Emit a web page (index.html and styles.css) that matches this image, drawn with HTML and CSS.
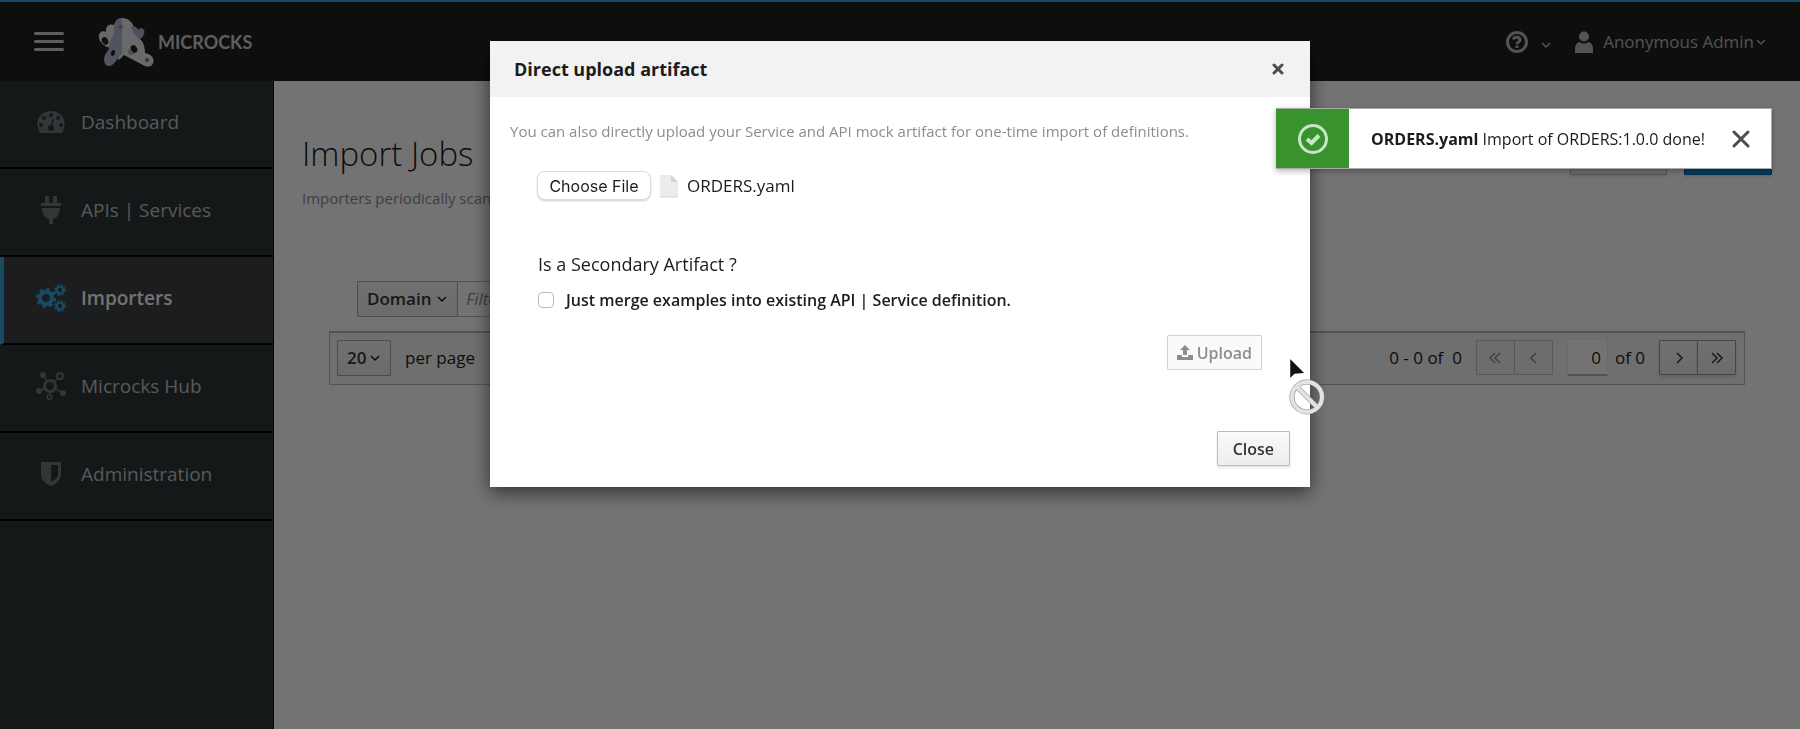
FILE: index.html
```html
<!DOCTYPE html>
<html lang="en">
<head>
    <meta charset="UTF-8">
    <meta name="viewport" content="width=device-width, initial-scale=1.0">
    <title>Microcks - Import Jobs</title>
    <link rel="stylesheet" href="styles.css">
</head>
<body>

    <!-- Top bar -->
    <header class="navbar">
        <button class="menu-toggle" type="button" aria-label="Toggle navigation"><span></span><span></span><span></span></button>
        <a class="brand" href="#">
            <svg width="56" height="50" viewBox="0 0 56 50">
                <path d="M1 21C0 16 4 13 8 15C7 9 12 6 16 8C18 3 20 1 24 1C30 1 35 5 36 11C41 13 43 17 42 22C46 26 47 31 47 36C54 37 58 43 54 48C52 50 48 50 45 48L26 38L21 43L14 31C9 31 2 27 1 21Z" fill="#e8e8e8"/>
                <path d="M33 10C36 8 39 10 40 13C43 9 48 12 46 17C45 21 42 22 41 22L36 17Z" fill="#a9b6cc"/>
                <path d="M24 1C18 2 16 7 16 12C17 18 12 22 11 27C11 31 12 31 9 35C5 39 5 48 10 49C16 50 18 42 24 37Z" fill="#b0bbd0"/>
                <ellipse cx="7" cy="24" rx="3" ry="4" fill="#222" transform="rotate(-30 7 24)"/>
                <ellipse cx="15" cy="36" rx="2" ry="3" fill="#222" transform="rotate(20 15 36)"/>
                <circle cx="33" cy="35" r="3" fill="#a9b6cc"/>
                <ellipse cx="36" cy="32" rx="3" ry="4" fill="#222" transform="rotate(-30 36 32)"/>
                <circle cx="49" cy="43" r="2" fill="#777"/>
                <circle cx="23" cy="10" r="2" fill="#8b95a8"/>
            </svg>
            <span>MICROCKS</span>
        </a>
        <div class="navbar-right">
            <button class="nav-link help" type="button" aria-label="Help">
                <svg width="24" height="24" viewBox="0 0 24 24" fill="none" stroke="currentColor" stroke-width="3">
                    <circle cx="12" cy="12" r="9.5"/>
                    <path d="M8.5 9.5C9 6.5 15 6.500 15 10C15 12 12 12 12 14.200M12 15.500V18"/>
                </svg>
                <svg class="chevron low" width="10" height="10" viewBox="0 0 10 10"><path d="M1 3L5 7L9 3"/></svg>
            </button>
            <button class="nav-link user" type="button">
                <svg width="18" height="22" viewBox="0 0 18 22" fill="currentColor">
                    <circle cx="9" cy="5.500" r="5"/>
                    <path d="M0 22V18C0 13 3 11 5 11C7 13 11 13 13 11C15 11 18 13 18 18V22Z"/>
                </svg>
                <span>Anonymous Admin</span>
                <svg class="chevron" width="10" height="10" viewBox="0 0 10 10"><path d="M1 3L5 7L9 3"/></svg>
            </button>
        </div>
    </header>

    <div class="layout">
        <!-- Side navigation -->
        <nav class="sidebar">
            <a href="#">
                <svg width="28" height="28" viewBox="0 0 28 28">
                    <path d="M3 25C-4 13 4 3 14 3C24 3 32 13 25 25Z" fill="currentColor"/>
                    <g fill="#2d3538"><circle cx="4" cy="17" r="2"/><circle cx="7" cy="10" r="2"/><circle cx="14" cy="7" r="2"/><circle cx="21" cy="10" r="2"/><circle cx="24" cy="17" r="2"/><circle cx="14" cy="20" r="3"/></g>
                    <path d="M14 19L16.500 11" stroke="#2d3538" stroke-width="1.500"/>
                </svg>
                <span>Dashboard</span>
            </a>
            <a href="#">
                <svg width="28" height="28" viewBox="0 0 28 28" fill="currentColor">
                    <path d="M8 0H12V7H16V0H20V7H24V10H4V7H8ZM5 12H23C23 18 20 22 16 23V28H12V23C8 22 5 18 5 12Z"/>
                </svg>
                <span>APIs | Services</span>
            </a>
            <a href="#" class="active">
                <svg width="30" height="28" viewBox="0 0 30 28" fill="none" stroke="currentColor">
                    <circle cx="10" cy="14" r="6" stroke-width="4"/>
                    <circle cx="10" cy="14" r="8.800" stroke-width="2.600" stroke-dasharray="3.500 3.410"/>
                    <circle cx="24" cy="6" r="3.400" stroke-width="2.400"/>
                    <circle cx="24" cy="6" r="5" stroke-width="1.800" stroke-dasharray="2.200 1.720"/>
                    <circle cx="24" cy="22" r="3.400" stroke-width="2.400"/>
                    <circle cx="24" cy="22" r="5" stroke-width="1.800" stroke-dasharray="2.200 1.720"/>
                </svg>
                <span>Importers</span>
            </a>
            <a href="#">
                <svg width="30" height="28" viewBox="0 0 30 28" fill="none" stroke="currentColor">
                    <path d="M7 3L11 9M24 4L17 11M3 19L9 16M14 25V18M27 21L18 16" stroke-width="1.500"/>
                    <circle cx="14" cy="14" r="5.500" stroke-width="3" fill="#2d3538"/>
                    <circle cx="24" cy="4" r="3" stroke-width="2" fill="#2d3538"/>
                    <circle cx="13.500" cy="25" r="2.300" stroke-width="1.600" fill="#2d3538"/>
                    <g fill="currentColor" stroke="none"><circle cx="7" cy="3" r="3"/><circle cx="3" cy="19" r="3"/><circle cx="27" cy="21" r="3"/></g>
                </svg>
                <span>Microcks Hub</span>
            </a>
            <a href="#">
                <svg width="28" height="28" viewBox="0 0 28 28" fill="currentColor">
                    <path fill-rule="evenodd" d="M4 2H24V14C24 20 19 24 14 26C9 24 4 20 4 14ZM14 5V22C18 20 21 17 21 14V5Z"/>
                </svg>
                <span>Administration</span>
            </a>
        </nav>

        <!-- Import jobs page -->
        <main class="content">
            <div class="page-head">
                <div>
                    <h1>Import Jobs</h1>
                    <p>Importers periodically scan</p>
                </div>
                <div class="page-actions">
                    <button class="btn" type="button" aria-label="Upload"></button>
                    <button class="btn btn-primary" type="button" aria-label="Create"></button>
                </div>
            </div>

            <div class="filter">
                <div class="select-wrap domain">
                    <select aria-label="Filter field"><option>Domain</option></select>
                    <svg class="chevron" width="10" height="10" viewBox="0 0 10 10"><path d="M1 3L5 7L9 3"/></svg>
                </div>
                <input type="text" placeholder="Filter" aria-label="Filter value">
            </div>

            <div class="pagination">
                <div class="select-wrap size">
                    <select aria-label="Items per page"><option>20</option></select>
                    <svg class="chevron" width="10" height="10" viewBox="0 0 10 10"><path d="M1 3L5 7L9 3"/></svg>
                </div>
                <span class="per-page">per page</span>
                <span class="range">0 - 0 of &nbsp;0</span>
                <div class="pager">
                    <button class="btn" type="button" disabled aria-label="First page"><svg class="chevron" width="12" height="12" viewBox="0 0 12 12"><path d="M6 1L1 6L6 11M11 1L6 6L11 11"/></svg></button>
                    <button class="btn" type="button" disabled aria-label="Previous page"><svg class="chevron" width="12" height="12" viewBox="0 0 12 12"><path d="M9 1L4 6L9 11"/></svg></button>
                </div>
                <input class="page-number" type="text" value="0" aria-label="Current page">
                <span class="total">of 0</span>
                <div class="pager">
                    <button class="btn" type="button" aria-label="Next page"><svg class="chevron" width="12" height="12" viewBox="0 0 12 12"><path d="M4 1L9 6L4 11"/></svg></button>
                    <button class="btn" type="button" aria-label="Last page"><svg class="chevron" width="12" height="12" viewBox="0 0 12 12"><path d="M1 1L6 6L1 11M6 1L11 6L6 11"/></svg></button>
                </div>
            </div>
        </main>
    </div>

    <!-- Upload dialog -->
    <div class="backdrop">
        <div class="modal" role="dialog" aria-labelledby="modal-title">
            <div class="modal-header">
                <h2 id="modal-title">Direct upload artifact</h2>
                <button class="icon-btn" type="button" aria-label="Close dialog">
                    <svg width="12" height="12" viewBox="0 0 12 12"><path d="M2 2L10 10M10 2L2 10" stroke="currentColor" stroke-width="3" stroke-linecap="round"/></svg>
                </button>
            </div>
            <div class="modal-body">
                <p class="intro">You can also directly upload your Service and API mock artifact for one-time import of definitions.</p>
                <div class="file-row">
                    <button class="choose" type="button" onclick="document.getElementById('artifact').click()">Choose File</button>
                    <input type="file" id="artifact" hidden>
                    <svg width="20" height="24" viewBox="0 0 20 24">
                        <path d="M1 1H12L19 8V23H1Z" fill="#ececec"/>
                        <path d="M12 1L19 8H12Z" fill="#d2d2d2"/>
                        <path d="M1 23H19" stroke="#d5d5d5"/>
                    </svg>
                    <span>ORDERS.yaml</span>
                </div>
                <p class="question">Is a Secondary Artifact ?</p>
                <div class="check-row">
                    <input type="checkbox" id="secondary">
                    <label for="secondary">Just merge examples into existing API | Service definition.</label>
                </div>
                <div class="upload-row">
                    <button class="btn" type="button" disabled>
                        <svg width="16" height="16" viewBox="0 0 16 16" fill="currentColor"><path d="M8 0L13 5H10V10H6V5H3ZM0 10H5V12H11V10H16V15H0Z"/></svg>
                        Upload
                    </button>
                </div>
            </div>
            <div class="modal-footer">
                <button class="btn" type="button">Close</button>
            </div>
        </div>
    </div>

    <!-- Success notification -->
    <div class="toast" role="status">
        <div class="toast-icon">
            <svg width="32" height="32" viewBox="0 0 32 32" fill="none" stroke="currentColor">
                <circle cx="16" cy="16" r="13.500" stroke-width="3"/>
                <path d="M10 16L14.500 20L22 12.500" stroke-width="4"/>
            </svg>
        </div>
        <p><strong>ORDERS.yaml</strong> Import of ORDERS:1.0.0 done!</p>
        <button class="icon-btn" type="button" aria-label="Dismiss">
            <svg width="18" height="18" viewBox="0 0 18 18"><path d="M2 2L16 16M16 2L2 16" stroke="currentColor" stroke-width="3" stroke-linecap="round"/></svg>
        </button>
    </div>

    <!-- Not-allowed pointer -->
    <svg class="pointer" width="44" height="68" viewBox="0 0 44 68">
        <path d="M3 2V27L9 21L21 20Z" fill="#111" stroke="#fff" stroke-width="2.500"/>
        <g fill="none">
            <circle cx="21" cy="43" r="15" stroke="#888" stroke-width="5"/>
            <path d="M11 33L31 53" stroke="#888" stroke-width="5"/>
            <circle cx="21" cy="43" r="15" stroke="#e2e2e2" stroke-width="4"/>
            <path d="M11 33L31 53" stroke="#e2e2e2" stroke-width="4"/>
        </g>
    </svg>

</body>
</html>
```
FILE: styles.css
```css
* {
    box-sizing: border-box;
}

body {
    margin: 0;
    min-height: 100vh;
    display: flex;
    flex-direction: column;
    font-family: "Open Sans", sans-serif;
    font-size: 17px;
    line-height: 24px;
    color: #1c1c1c;
    background-color: #fff;
}

h1, h2, p {
    margin: 0;
}

button, input, select {
    font: inherit;
    color: inherit;
}

button {
    cursor: pointer;
}

/* Top bar */
.navbar {
    display: flex;
    align-items: center;
    height: 81px;
    padding: 0 34px;
    background-color: #212121;
    border-top: 2px solid #39a5dc;
}

.menu-toggle {
    display: flex;
    flex-direction: column;
    gap: 5px;
    width: 30px;
    padding: 0;
    border: 0;
    background: none;
}

.menu-toggle span {
    height: 3px;
    border-radius: 2px;
    background-color: #d0d0d0;
}

.brand {
    display: flex;
    align-items: center;
    gap: 4px;
    margin-left: 34px;
    color: #d0d0d0;
    font-family: Lato, sans-serif;
    font-size: 18px;
    font-weight: bold;
    text-decoration: none;
}

.navbar-right {
    display: flex;
    gap: 24px;
    margin-left: auto;
}

.nav-link {
    display: flex;
    align-items: center;
    gap: 10px;
    padding: 0;
    border: 0;
    background: none;
    color: #b8b8b8;
}

.user .chevron {
    margin-left: -8px;
}

.chevron {
    fill: none;
    stroke: currentColor;
    stroke-width: 1.5;
}

.help {
    gap: 12px;
}

.low {
    margin-top: 6px;
}

/* Side navigation */
.layout {
    display: flex;
    flex: 1;
}

.sidebar {
    width: 274px;
    background-color: #2d3538;
    border-right: 1px solid #111;
}

.sidebar a {
    display: flex;
    align-items: center;
    height: 88px;
    padding: 0 0 4px 36px;
    border-bottom: 2px solid #050505;
    color: #c4c4c4;
    font-size: 19px;
    text-decoration: none;
}

.sidebar svg {
    width: 30px;
    margin-right: 15px;
    color: #72767b;
}

.sidebar .active {
    padding-left: 32px;
    border-left: 4px solid #39a5dc;
    background-color: #3c4045;
    color: #fff;
    font-weight: 600;
}

.sidebar .active svg {
    color: #39a5dc;
}

/* Page */
.content {
    flex: 1;
    padding: 49px 28px 0;
}

.page-head {
    display: flex;
    justify-content: space-between;
    align-items: flex-start;
}

.page-head h1 {
    font-size: 33px;
    font-weight: 300;
    line-height: 48px;
}

.page-head p {
    margin-top: 8px;
    font-size: 15px;
    color: #8b8d8f;
}

.page-actions {
    display: flex;
    gap: 17px;
    padding-top: 10px;
}

.page-actions .btn {
    width: 97px;
}

.page-actions .btn-primary {
    width: 88px;
    border-color: #00659c;
    background: #0088ce;
}

.btn {
    display: flex;
    align-items: center;
    justify-content: center;
    gap: 4px;
    height: 35px;
    padding: 0 14px;
    border: 1px solid #bbb;
    border-radius: 1px;
    background: linear-gradient(#fafafa, #ededed);
    box-shadow: 0 2px 3px rgba(3, 3, 3, 0.1);
    font-size: 16px;
    font-weight: 600;
    color: #363636;
}

.btn:disabled {
    background: #fafafa;
    box-shadow: none;
    border-color: #d1d1d1;
    color: #8b8d8f;
    cursor: not-allowed;
}

/* Drop-downs: the arrow shares the cell of the select */
.select-wrap {
    display: grid;
    align-items: center;
}

.select-wrap select,
.select-wrap .chevron {
    grid-area: 1 / 1;
}

.select-wrap select {
    width: 100%;
    height: 36px;
    padding: 0 9px;
    appearance: none;
    border: 1px solid #aaa;
    border-radius: 1px;
    background: linear-gradient(#fafafa, #ededed);
    color: #363636;
    font-weight: 600;
}

.select-wrap .chevron {
    justify-self: end;
    margin-right: 11px;
    pointer-events: none;
}

.filter {
    display: flex;
    margin: 71px 55px 0;
}

.domain {
    width: 101px;
}

.filter input {
    width: 300px;
    padding: 0 8px;
    border: 1px solid #bbb;
    border-left: 0;
    background-color: #fff;
}

.filter input::placeholder {
    font-style: italic;
    color: #8b8d8f;
}

.pagination {
    display: flex;
    align-items: center;
    height: 54px;
    margin: 14px 27px 0;
    padding: 0 8px 2px 7px;
    border: 1px solid #b8b8b8;
    border-top: 2px solid #b8b8b8;
    background-color: #f5f5f5;
}

.size {
    width: 54px;
}

.per-page {
    margin-left: 14px;
}

.range {
    margin-left: auto;
}

.pager {
    display: flex;
    margin-left: 14px;
}

.pager .btn {
    width: 39px;
    padding: 0;
    border-color: #999;
}

.pager .btn:disabled {
    background: #f2f2f2;
    border-color: #c4c4c4;
}

.pager .btn + .btn {
    margin-left: -1px;
}

.page-number {
    width: 41px;
    height: 37px;
    margin-left: 14px;
    padding: 0 6px;
    border: 1px solid #eee;
    border-bottom: 2px solid #bbb;
    background-color: #fff;
    text-align: right;
}

.total {
    margin-left: 7px;
}

/* Upload dialog */
.backdrop {
    position: fixed;
    inset: 0;
    display: flex;
    align-items: flex-start;
    justify-content: center;
    padding-top: 41px;
    background-color: rgba(0, 0, 0, 0.55);
}

.modal {
    width: 820px;
    background-color: #fff;
    box-shadow: 0 5px 18px rgba(0, 0, 0, 0.6);
}

.modal-header {
    display: flex;
    align-items: center;
    justify-content: space-between;
    height: 56px;
    padding: 0 26px 0 24px;
    background-color: #f2f2f2;
}

.modal-header h2 {
    font-size: 18px;
    font-weight: 700;
}

.icon-btn {
    display: flex;
    padding: 0;
    border: 0;
    background: none;
    color: #4d4d4d;
}

.modal-body {
    padding: 22px 20px 0;
}

.intro {
    font-size: 15px;
    color: #8b8d8f;
}

.file-row {
    display: flex;
    align-items: center;
    gap: 8px;
    margin: 28px 27px 0;
}

.choose {
    height: 29px;
    width: 114px;
    padding: 0;
    border: 1px solid #ddd;
    border-radius: 8px;
    background-color: #fff;
    box-shadow: 0 1px 2px rgba(0, 0, 0, 0.2);
    font-family: Inter, sans-serif;
    font-size: 16px;
}

.question {
    margin: 52px 28px 0;
    font-size: 18px;
}

.check-row {
    display: flex;
    align-items: center;
    gap: 12px;
    margin: 12px 28px 0;
}

.check-row input {
    width: 16px;
    height: 16px;
    margin: 0;
    appearance: none;
    border: 1px solid #bbb;
    border-radius: 4px;
    background-color: #fff;
}

.check-row label {
    font-size: 16px;
    font-weight: 600;
}

.upload-row {
    display: flex;
    justify-content: flex-end;
    margin: 23px 28px 0;
}

.upload-row .btn {
    padding: 0 9px;
}

.modal-footer {
    display: flex;
    justify-content: flex-end;
    padding: 61px 20px 21px;
}

.modal-footer .btn {
    padding: 0 15px;
}

/* Notification */
.toast {
    position: fixed;
    top: 108px;
    right: 28px;
    display: flex;
    align-items: center;
    width: 496px;
    height: 61px;
    padding-right: 21px;
    border: 1px solid #aaa;
    border-left: 0;
    background-color: #fff;
    box-shadow: 0 2px 6px rgba(3, 3, 3, 0.3);
    font-size: 16px;
}

.toast-icon {
    display: flex;
    align-items: center;
    justify-content: center;
    align-self: stretch;
    width: 73px;
    background-color: #38932f;
    color: #c8e6c4;
}

.toast p {
    flex: 1;
    margin-left: 22px;
}

.pointer {
    position: fixed;
    top: 354px;
    left: 1286px;
    pointer-events: none;
}
```
